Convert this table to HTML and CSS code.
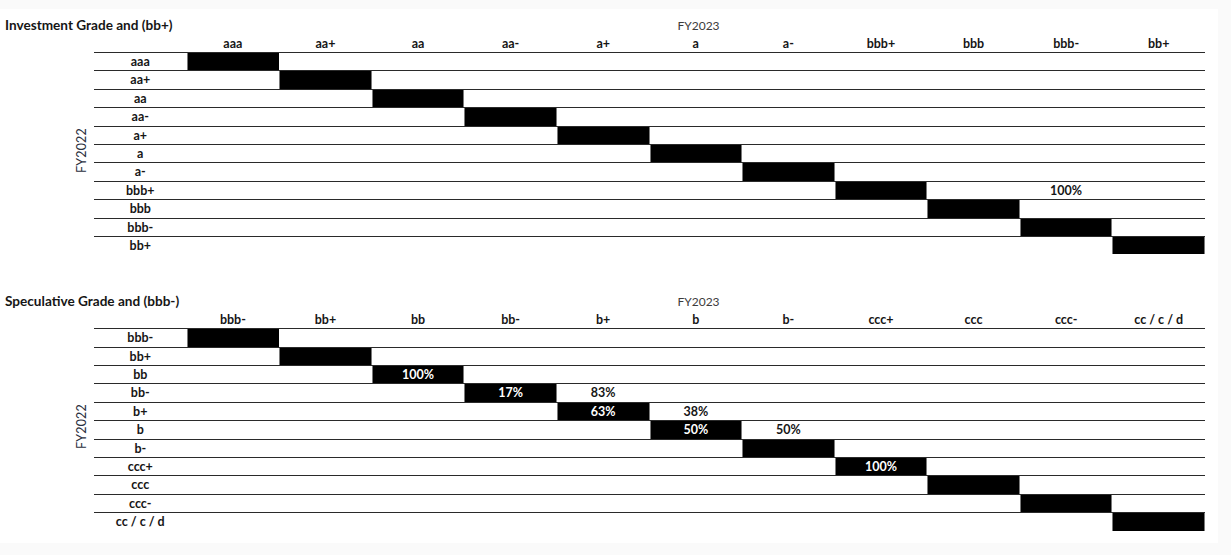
FILE: index.html
```html
<!DOCTYPE html>
<html lang="en">
<head>
<meta charset="utf-8">
<title>Rating transitions</title>
<link rel="stylesheet" href="styles.css">
</head>
<body>
<div class="sheet">
  <section class="matrix">
    <div class="caption">
      <div class="title">Investment Grade and (bb+)</div>
      <div class="year">FY2023</div>
    </div>
    <div class="header">
      <div></div><div>aaa</div><div>aa+</div><div>aa</div><div>aa-</div><div>a+</div><div>a</div><div>a-</div><div>bbb+</div><div>bbb</div><div>bbb-</div><div>bb+</div>
    </div>
    <div class="axis"><span>FY2022</span></div>
    <div class="body">
      <div class="row"><div class="lab">aaa</div><div class="fill k2"></div></div>
      <div class="row"><div class="lab">aa+</div><div class="fill k3"></div></div>
      <div class="row"><div class="lab">aa</div><div class="fill k4"></div></div>
      <div class="row"><div class="lab">aa-</div><div class="fill k5"></div></div>
      <div class="row"><div class="lab">a+</div><div class="fill k6"></div></div>
      <div class="row"><div class="lab">a</div><div class="fill k7"></div></div>
      <div class="row"><div class="lab">a-</div><div class="fill k8"></div></div>
      <div class="row"><div class="lab">bbb+</div><div class="fill k9"></div><div class="pct k11">100%</div></div>
      <div class="row"><div class="lab">bbb</div><div class="fill k10"></div></div>
      <div class="row"><div class="lab">bbb-</div><div class="fill k11"></div></div>
      <div class="row last"><div class="lab">bb+</div><div class="fill k12"></div></div>
    </div>
  </section>

  <section class="matrix second">
    <div class="caption">
      <div class="title">Speculative Grade and (bbb-)</div>
      <div class="year">FY2023</div>
    </div>
    <div class="header">
      <div></div><div>bbb-</div><div>bb+</div><div>bb</div><div>bb-</div><div>b+</div><div>b</div><div>b-</div><div>ccc+</div><div>ccc</div><div>ccc-</div><div>cc / c / d</div>
    </div>
    <div class="axis"><span>FY2022</span></div>
    <div class="body">
      <div class="row"><div class="lab">bbb-</div><div class="fill k2"></div></div>
      <div class="row"><div class="lab">bb+</div><div class="fill k3"></div></div>
      <div class="row"><div class="lab">bb</div><div class="fill k4">100%</div></div>
      <div class="row"><div class="lab">bb-</div><div class="fill k5">17%</div><div class="pct k6">83%</div></div>
      <div class="row"><div class="lab">b+</div><div class="fill k6">63%</div><div class="pct k7">38%</div></div>
      <div class="row"><div class="lab">b</div><div class="fill k7">50%</div><div class="pct k8">50%</div></div>
      <div class="row"><div class="lab">b-</div><div class="fill k8"></div></div>
      <div class="row"><div class="lab">ccc+</div><div class="fill k9">100%</div></div>
      <div class="row"><div class="lab">ccc</div><div class="fill k10"></div></div>
      <div class="row"><div class="lab">ccc-</div><div class="fill k11"></div></div>
      <div class="row last"><div class="lab">cc / c / d</div><div class="fill k12"></div></div>
    </div>
  </section>
</div>
</body>
</html>
```

FILE: styles.css
```css
html, body {
  margin: 0;
  padding: 0;
}

body {
  background: #fafafa;
  font-family: Lato, "Open Sans", "Liberation Sans", sans-serif;
  color: #161616;
}

.sheet {
  width: 1218px;
  height: 534px;
  margin-top: 9px;
  padding-top: 7px;
  box-sizing: border-box;
  background: #ffffff;
}

.matrix {
  display: grid;
  width: 1205px;
  grid-template-columns: 94px 1111px;
  grid-template-rows: 18px 18px auto;
}

.matrix.second {
  margin-top: 38px;
}

.caption {
  grid-column: 1 / -1;
  display: grid;
  grid-template-columns: 186px 1fr;
  align-items: center;
}

.title {
  padding-left: 5px;
  font-weight: 700;
  font-size: 13.6px;
  white-space: nowrap;
}

.year {
  text-align: center;
  font-size: 12px;
  color: #3c3c3c;
  padding-left: 6px;
}

.header {
  grid-column: 2;
  display: grid;
  grid-template-columns: repeat(12, 1fr);
  align-items: end;
  font-weight: 700;
  font-size: 12.5px;
  text-align: center;
  line-height: 16px;
}

.axis {
  grid-column: 1;
  grid-row: 3;
  display: flex;
  justify-content: flex-end;
  align-items: center;
  padding-right: 5px;
  padding-bottom: 6px;
}

.axis span {
  writing-mode: vertical-rl;
  transform: rotate(180deg);
  font-size: 12.5px;
  color: #2b3040;
  letter-spacing: 0.2px;
}

.body {
  grid-column: 2;
  grid-row: 3;
  display: flex;
  flex-direction: column;
}

.row {
  display: grid;
  grid-template-columns: repeat(12, 1fr);
  height: 18.4px;
  border-top: 1px solid #2a2a2a;
  box-sizing: border-box;
  font-weight: 700;
  font-size: 12.5px;
  line-height: 17px;
  text-align: center;
}

.lab {
  grid-column: 1;
}

.fill {
  background: #000000;
  color: #ffffff;
  box-shadow: inset 1px 0 0 #7a7a7a, inset -1px 0 0 #7a7a7a;
}

.row:first-child .fill {
  box-shadow: inset 1px 0 0 #7a7a7a;
}

.pct {
  color: #161616;
}

.k2 { grid-column: 2; }
.k3 { grid-column: 3; }
.k4 { grid-column: 4; }
.k5 { grid-column: 5; }
.k6 { grid-column: 6; }
.k7 { grid-column: 7; }
.k8 { grid-column: 8; }
.k9 { grid-column: 9; }
.k10 { grid-column: 10; }
.k11 { grid-column: 11; }
.k12 { grid-column: 12; }
```
